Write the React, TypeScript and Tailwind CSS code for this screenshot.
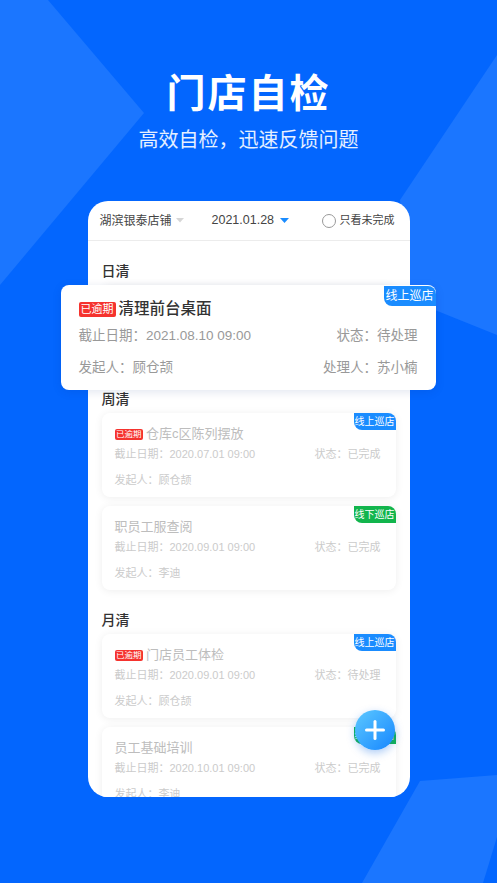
import React from 'react';

type Task = {
  title: string;
  overdue?: boolean;
  deadline: string;
  status: string;
  creator: string;
  handler?: string;
  channel: 'online' | 'offline';
};

const FONT = { fontFamily: '"Liberation Sans", "Noto Sans CJK SC", sans-serif' };

const weekly: Task[] = [
  { title: '仓库c区陈列摆放', overdue: true, deadline: '2020.07.01 09:00', status: '已完成', creator: '顾仓颉', channel: 'online' },
  { title: '职员工服查阅', deadline: '2020.09.01 09:00', status: '已完成', creator: '李迪', channel: 'offline' },
];

const monthly: Task[] = [
  { title: '门店员工体检', overdue: true, deadline: '2020.09.01 09:00', status: '待处理', creator: '顾仓颉', channel: 'online' },
  { title: '员工基础培训', deadline: '2020.10.01 09:00', status: '已完成', creator: '李迪', channel: 'offline' },
];

const daily: Task = {
  title: '清理前台桌面',
  overdue: true,
  deadline: '2021.08.10 09:00',
  status: '待处理',
  creator: '顾仓颉',
  handler: '苏小楠',
  channel: 'online',
};

const Background = () => (
  <svg className="absolute inset-0" width="497" height="883" viewBox="0 0 497 883">
    <polygon points="0,0 48,0 144,113 0,285" fill="#1b76ff" />
    <polygon points="497,55 400,200 410,300 497,335" fill="#1b76ff" />
    <polygon points="420,781 497,775 497,837 483,883 362,883" fill="#1b76ff" />
  </svg>
);

const Caret = ({ color, size }: { color: string; size: number }) => (
  <svg width={size} height={size * 0.55} viewBox="0 0 10 5.5">
    <polygon points="0,0 10,0 5,5.5" fill={color} />
  </svg>
);

const SmallCard = ({ task }: { task: Task }) => (
  <div className="relative h-[84px] w-full rounded-[8px] bg-white px-[13px] pt-[12px] shadow-[0_1px_8px_rgba(0,0,0,0.07)]">
    <span
      className={`absolute right-0 top-0 flex h-[17px] w-[42px] items-center justify-center rounded-tr-[8px] rounded-bl-[8px] text-[10px] text-white ${
        task.channel === 'online' ? 'bg-[#1a8cff]' : 'bg-[#12b54d]'
      }`}
    >
      {task.channel === 'online' ? '线上巡店' : '线下巡店'}
    </span>
    <div className="flex h-[18px] items-center">
      {task.overdue && (
        <span className="mr-[3px] flex h-[11px] items-center rounded-[2px] bg-[#f5332e] px-[1.5px] text-[8.5px] leading-none text-white">
          已逾期
        </span>
      )}
      <span className="text-[13px] text-[#bdbdbd]">{task.title}</span>
    </div>
    <div className="mt-[3px] flex h-[16px] items-center justify-between text-[11px] text-[#cbcbcb]">
      <span>截止日期：{task.deadline}</span>
      <span className="pr-[2px]">状态：{task.status}</span>
    </div>
    <div className="mt-[10px] flex h-[16px] items-center text-[11px] text-[#cbcbcb]">
      <span>发起人：{task.creator}</span>
    </div>
  </div>
);

const BigCard = ({ task }: { task: Task }) => (
  <div className="relative h-[105px] w-[375px] rounded-[8px] bg-white px-[18px] pt-[13px] shadow-[0_2px_10px_rgba(0,40,120,0.12)]">
    <span className="absolute right-0 top-[1px] flex h-[20px] w-[52px] items-center justify-center rounded-tr-[8px] rounded-bl-[8px] bg-[#1a8cff] text-[12px] text-white">
      线上巡店
    </span>
    <div className="flex h-[22px] items-center">
      {task.overdue && (
        <span className="mr-[3px] flex h-[15px] items-center rounded-[2px] bg-[#f5332e] px-[2px] text-[11px] leading-none text-white">
          已逾期
        </span>
      )}
      <span className="text-[15.5px] font-medium text-[#333]">{task.title}</span>
    </div>
    <div className="mt-[6px] flex h-[20px] items-center justify-between text-[13.5px] text-[#999]">
      <span>截止日期：{task.deadline}</span>
      <span>状态：{task.status}</span>
    </div>
    <div className="mt-[12px] flex h-[20px] items-center justify-between text-[13.5px] text-[#999]">
      <span>发起人：{task.creator}</span>
      <span>处理人：{task.handler}</span>
    </div>
  </div>
);

const Section = ({ label, children }: { label: string; children: React.ReactNode }) => (
  <div className="flex flex-col">
    <div className="h-[20px] text-[14px] leading-[20px] font-medium text-[#333]">{label}</div>
    <div className="mt-[4px] flex flex-col gap-[9px]">{children}</div>
  </div>
);

export default function App() {
  return (
    <div className="relative h-[883px] w-[497px] overflow-hidden bg-[#0366fe]" style={FONT}>
      <Background />
      <div className="relative flex flex-col items-center">
        <h1 className="pt-[70px] text-[39px] leading-[48px] font-bold tracking-[2px] text-white">门店自检</h1>
        <p className="mt-[8px] text-[20px] leading-[28px] text-white/90">高效自检，迅速反馈问题</p>

        <div className="relative mt-[47px] w-[322px]">
          <div className="h-[596px] w-full overflow-hidden rounded-[20px] bg-white">
            <div className="flex h-[40px] items-center border-b border-[#ececec] pl-[12px] pr-[15px]">
              <span className="text-[12px] text-[#444]">湖滨银泰店铺</span>
              <span className="ml-[4px]">
                <Caret color="#d6d6d6" size={8} />
              </span>
              <span className="ml-[28px] text-[12.5px] text-[#444]">2021.01.28</span>
              <span className="ml-[6px]">
                <Caret color="#1a8cff" size={9} />
              </span>
              <div className="ml-auto flex items-center">
                <span className="h-[14px] w-[14px] rounded-full border border-[#999]" />
                <span className="ml-[4px] text-[11px] text-[#444]">只看未完成</span>
              </div>
            </div>

            <div className="flex flex-col gap-[20px] px-[14px] pt-[20px]">
              <Section label="日清">
                <SmallCard task={daily} />
              </Section>
              <Section label="周清">
                {weekly.map((t) => (
                  <SmallCard key={t.title} task={t} />
                ))}
              </Section>
              <Section label="月清">
                {monthly.map((t) => (
                  <SmallCard key={t.title} task={t} />
                ))}
              </Section>
            </div>
          </div>

          <div className="absolute left-[-27px] top-[84px] z-10">
            <BigCard task={daily} />
          </div>

          <button className="absolute left-[267px] top-[509px] z-10 flex h-[40px] w-[40px] items-center justify-center rounded-full bg-gradient-to-br from-[#5cc8ff] to-[#1485ff] shadow-[0_3px_8px_rgba(20,110,230,0.35)]">
            <svg width="22" height="22" viewBox="0 0 22 22">
              <rect x="9.5" y="1" width="3" height="20" rx="1.5" fill="#fff" />
              <rect x="1" y="9.5" width="20" height="3" rx="1.5" fill="#fff" />
            </svg>
          </button>
        </div>
      </div>
    </div>
  );
}
